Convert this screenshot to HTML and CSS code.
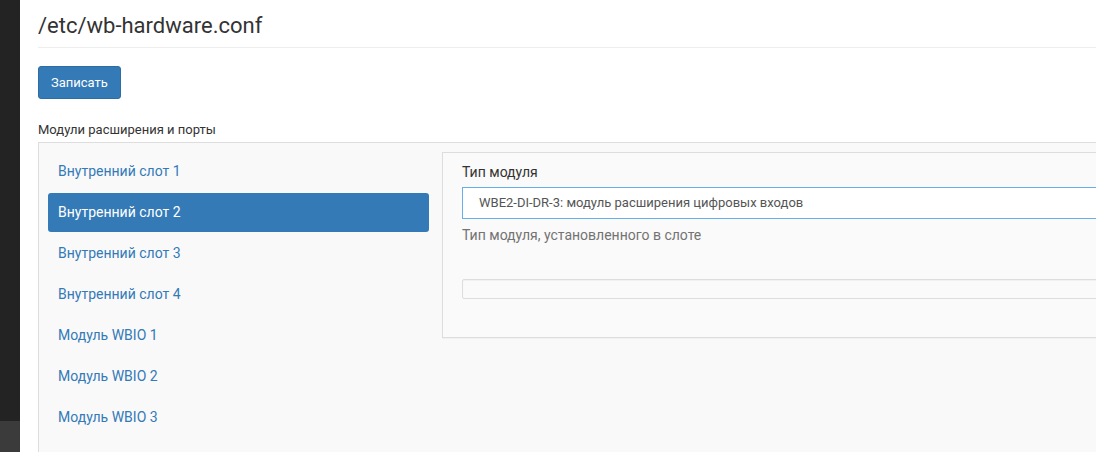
FILE: index.html
```html
<!DOCTYPE html>
<html lang="ru">
<head>
<meta charset="utf-8">
<title>/etc/wb-hardware.conf</title>
<link rel="stylesheet" href="styles.css">
</head>
<body>
<aside class="sidebar"><div class="sidebar-bottom"></div></aside>
<main class="main">
  <h1 class="page-title">/etc/wb-hardware.conf</h1>
  <div class="actions">
    <button class="btn-primary" type="button">Записать</button>
  </div>
  <div class="section-label">Модули расширения и порты</div>
  <div class="panel">
    <ul class="pills">
      <li><a class="pill" href="#">Внутренний слот 1</a></li>
      <li><a class="pill active" href="#">Внутренний слот 2</a></li>
      <li><a class="pill" href="#">Внутренний слот 3</a></li>
      <li><a class="pill" href="#">Внутренний слот 4</a></li>
      <li><a class="pill" href="#">Модуль WBIO 1</a></li>
      <li><a class="pill" href="#">Модуль WBIO 2</a></li>
      <li><a class="pill" href="#">Модуль WBIO 3</a></li>
    </ul>
    <div class="detail">
      <div class="card">
        <label class="field-label">Тип модуля</label>
        <div class="select">WBE2-DI-DR-3: модуль расширения цифровых входов</div>
        <p class="help">Тип модуля, установленного в слоте</p>
        <div class="well"></div>
      </div>
    </div>
  </div>
</main>
</body>
</html>
```
FILE: styles.css
```css
html, body {
  margin: 0;
  padding: 0;
  height: 452px;
  overflow: hidden;
  background: #fff;
}
body {
  display: flex;
  font-family: Roboto, "Noto Sans", sans-serif;
  color: #333;
}
.sidebar {
  width: 20px;
  flex: none;
  height: 452px;
  background: #232323;
  display: flex;
  flex-direction: column;
  justify-content: flex-end;
}
.sidebar-bottom {
  height: 31px;
  background: #3b3b3b;
}
.main {
  flex: none;
  width: 1200px;
  padding-left: 18px;
}
.page-title {
  margin: 0;
  padding: 12px 0 7px;
  font-size: 22px;
  font-weight: 400;
  line-height: 28px;
  color: #333;
  border-bottom: 1px solid #eee;
}
.actions {
  padding-top: 18px;
}
.btn-primary {
  display: block;
  height: 33px;
  padding: 0 12px;
  font-family: Roboto, sans-serif;
  font-size: 13px;
  color: #fff;
  background: #337ab7;
  border: 1px solid #2e6da4;
  border-radius: 3px;
}
.section-label {
  margin-top: 22px;
  font-size: 13px;
  line-height: 18px;
  color: #333;
  margin-bottom: 3px;
}
.panel {
  display: flex;
  gap: 13px;
  padding: 9px;
  border: 1px solid #ddd;
  background: #f9f9f9;
  min-height: 320px;
}
.pills {
  list-style: none;
  margin: 0;
  padding: 0;
  width: 381px;
  flex: none;
  display: flex;
  flex-direction: column;
  gap: 2px;
}
.pill {
  display: block;
  padding: 10px 10px;
  line-height: 19px;
  font-size: 14px;
  color: #337ab7;
  text-decoration: none;
  border-radius: 3px;
}
.pill.active {
  background: #337ab7;
  color: #fff;
}
.detail {
  flex: 1;
}
.card {
  border: 1px solid #ddd;
  background: #fafafa;
  padding: 9px 19px 38px;
  box-shadow: 0 1px 1px rgba(0,0,0,0.03);
}
.field-label {
  display: block;
  font-size: 14px;
  line-height: 20px;
  color: #333;
  margin-bottom: 5px;
}
.select {
  height: 30px;
  line-height: 30px;
  padding: 0 16px;
  font-size: 13px;
  color: #555;
  background: #fff;
  border: 1px solid #66afe9;
}
.help {
  margin: 6px 0 0;
  font-size: 14px;
  line-height: 20px;
  color: #737373;
}
.well {
  margin-top: 34px;
  height: 18px;
  border: 1px solid #ddd;
  background: #fafafa;
  box-shadow: inset 0 1px 1px rgba(0,0,0,0.04);
  border-radius: 2px;
}
```
